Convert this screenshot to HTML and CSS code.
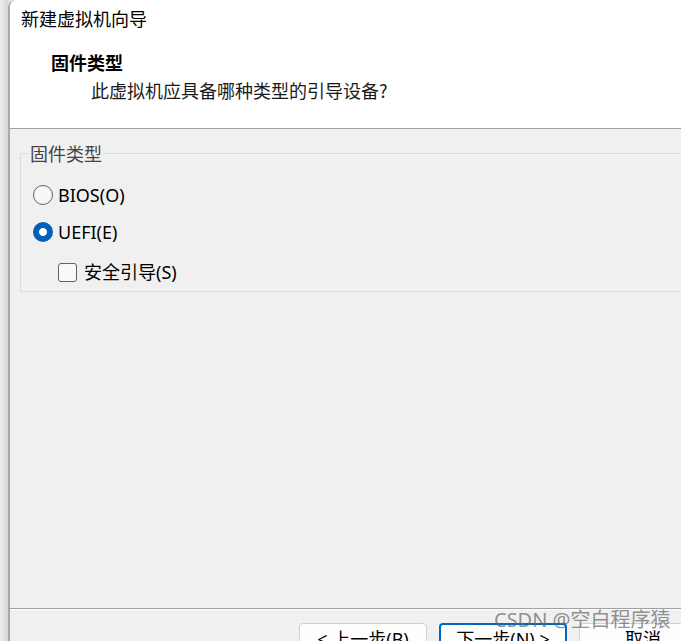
FILE: index.html
```html
<!DOCTYPE html>
<html lang="zh-CN">
<head>
<meta charset="utf-8">
<title>新建虚拟机向导</title>
<link rel="stylesheet" href="styles.css">
</head>
<body>
<div class="screen">
  <div class="edge"></div>
  <div class="window">
    <header class="head">
      <div class="title">新建虚拟机向导</div>
      <div class="h-title">固件类型</div>
      <div class="h-sub">此虚拟机应具备哪种类型的引导设备?</div>
    </header>
    <main class="content">
      <fieldset class="group">
        <legend class="group-label">固件类型</legend>
        <div class="opt opt-first"><span class="radio"></span><span class="opt-text">BIOS(O)</span></div>
        <div class="opt opt-second"><span class="radio radio-on"></span><span class="opt-text">UEFI(E)</span></div>
        <div class="opt opt-check"><span class="check"></span><span class="opt-text">安全引导(S)</span></div>
      </fieldset>
    </main>
    <footer class="foot">
      <div class="btn">&lt; 上一步(B)</div>
      <div class="btn btn-default">下一步(N) &gt;</div>
      <div class="btn">取消</div>
    </footer>
  </div>
  <div class="watermark">CSDN @空白程序猿</div>
</div>
</body>
</html>
```
FILE: styles.css
```css
html, body {
  margin: 0;
  padding: 0;
}
body {
  width: 681px;
  height: 641px;
  overflow: hidden;
  font-family: "Noto Sans", "Noto Sans CJK SC", sans-serif;
  font-size: 18px;
  color: #000;
}
.screen {
  position: relative;
  display: flex;
  height: 641px;
  background: #e2e2e2;
}
.edge {
  width: 8px;
  flex: none;
  background: linear-gradient(to right, #ececec, #d6d6d6);
}
.window {
  flex: 1;
  min-width: 0;
  display: flex;
  flex-direction: column;
  border-left: 2px solid #a9a9a9;
  border-top-left-radius: 8px;
  background: #f0f0f0;
  overflow: hidden;
}
.head {
  flex: none;
  background: #fff;
  border-bottom: 1px solid #a0a0a0;
  padding: 6px 0 0 11px;
  box-sizing: content-box;
  height: 122px;
}
.title {
  line-height: 24px;
  font-family: "Noto Sans CJK SC", sans-serif;
}
.h-title {
  margin: 20px 0 0 30px;
  line-height: 24px;
  font-weight: bold;
  font-family: "Noto Sans CJK SC", sans-serif;
}
.h-sub {
  margin: 4px 0 0 70px;
  line-height: 24px;
  color: #1a1a1a;
  font-family: "Noto Sans CJK SC", sans-serif;
}
.content {
  flex: 1;
  min-height: 0;
  padding-top: 12px;
}
.group {
  margin: 0 -40px 0 10px;
  padding: 0 0 4px 0;
  border: 1px solid #dcdcdc;
  min-width: 0;
}
.group-label {
  margin-left: 7px;
  padding: 0 2px;
  line-height: 24px;
  color: #444;
  font-family: "Noto Sans CJK SC", sans-serif;
}
.opt {
  display: flex;
  align-items: center;
  height: 30px;
  margin-left: 12px;
}
.opt-first { margin-top: 15px; }
.opt-second { margin-top: 7px; }
.opt-check { margin-top: 10px; margin-left: 37px; }
.radio {
  width: 18px;
  height: 18px;
  border: 1px solid #5f5f5f;
  border-radius: 50%;
  background: #f7f7f7;
  margin-right: 5px;
  flex: none;
}
.radio-on {
  width: 20px;
  height: 20px;
  border: none;
  background: radial-gradient(circle, #fff 0 3.6px, #005fb8 4.4px);
}
.check {
  width: 17px;
  height: 17px;
  border: 1px solid #626262;
  border-radius: 3px;
  background: #f9f9f9;
  margin-right: 7px;
  flex: none;
}
.opt-text {
  line-height: 24px;
}
.foot {
  flex: none;
  box-sizing: border-box;
  height: 33px;
  border-top: 1px solid #a0a0a0;
  box-shadow: inset 0 1px 0 #fff;
  padding: 14px 0 0 289px;
  display: flex;
  align-items: flex-start;
  gap: 12px;
}
.btn {
  flex: none;
  box-sizing: border-box;
  width: 128px;
  height: 32px;
  border: 1px solid #d0d0d0;
  border-radius: 4px;
  background: #fdfdfd;
  text-align: center;
  line-height: 30px;
  font-family: "Noto Sans", "Noto Sans CJK SC", sans-serif;
}
.btn-default {
  border: 2px solid #0067c0;
  line-height: 28px;
}
.watermark {
  position: absolute;
  left: 494px;
  top: 608px;
  font-size: 20px;
  line-height: 24px;
  color: rgba(100, 100, 100, 0.7);
  font-family: "Noto Sans", "Noto Sans CJK SC", sans-serif;
  white-space: nowrap;
}
```
